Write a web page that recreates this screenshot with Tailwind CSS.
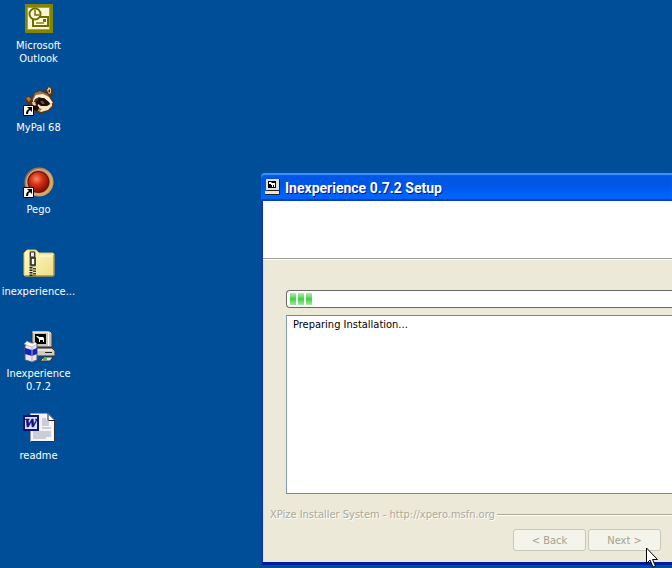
<!DOCTYPE html>
<html lang="en">
<head>
<meta charset="UTF-8">
<meta name="viewport" content="width=device-width, initial-scale=1.0">
<title>Inexperience 0.7.2 Setup</title>
<script src="https://cdn.jsdelivr.net/npm/@tailwindcss/browser@4"></script>
</head>
<body class="relative h-screen overflow-hidden bg-[#004e98] font-['DejaVu_Sans_Condensed','DejaVu_Sans',sans-serif] text-[11px] leading-[13px]">

<!-- Desktop icons -->
<ul class="w-[77px] pt-[3px] text-center text-white">
  <li class="h-[82px]">
    <a href="#" class="flex flex-col items-center gap-1">
      <svg class="size-8" viewBox="0 0 32 32">
        <rect x="2" y="1" width="28" height="29" fill="#848400"/>
        <rect x="4.500" y="4.500" width="22" height="22" fill="#f7f5d4" stroke="#a5a532"/>
        <path d="M10 14h15v9H10z" fill="#fffbe0" stroke="#6f6f00" stroke-width="2"/>
        <path d="M13 20h8" stroke="#848400" stroke-width="1.500"/>
        <rect x="20" y="16" width="3" height="3" fill="#6f6f00"/>
        <circle cx="12" cy="11" r="5.500" fill="#fffbe0" stroke="#6f6f00" stroke-width="2"/>
        <path d="M12 7v5h4" fill="none" stroke="#6f6f00" stroke-width="1.500"/>
      </svg>
      <span>Microsoft Outlook</span>
    </a>
  </li>
  <li class="h-[82px]">
    <a href="#" class="flex flex-col items-center gap-1">
      <svg class="size-8" viewBox="0 0 32 32">
        <!-- head and ears -->
        <path d="M2 13l3-2 4 1 2-4 5-3 7 1 1-4 3-1 3 3 0 6-2 2 3 4-1 6-4 4-6 2-6 0-6-3-4-6z" fill="#54341d"/>
        <path d="M24 5l2-3 2 2 0 4-2 1z" fill="#e9cda4"/>
        <path d="M25 6l2-2 0 4z" fill="#3a2012"/>
        <path d="M3 13l3-1 2 2-2 3z" fill="#a6774a"/>
        <!-- fur -->
        <path d="M9 15l3-7 5-2 7 3 3 4-8-3-6 2z" fill="#9c7248"/>
        <!-- brow, mask and muzzle -->
        <path d="M10 15l3-5 7-1 6 3 4 6-3 1-5-5-6-2-4 2-2 4z" fill="#fff1d6"/>
        <path d="M13 17l3-4 5 0 5 4 2 4-4 1-6-1-4 1z" fill="#1d0e09"/>
        <path d="M17 16l3 0 2 3-3 0z" fill="#6b4830"/>
        <path d="M15 19l3 2 6 0 5-3 0 3-4 4-7 2-4-2z" fill="#f8e5bf"/>
        <path d="M9 17l3 0 1 3-3 1z" fill="#e6c99c"/>
        <path d="M11 21l4 0 2 3-3 2-3-1z" fill="#160b08"/>
        <path d="M16 23l3 1-2 2-2-1z" fill="#a6774a"/>
        <path d="M0.500 20.500h10v10h-10z" fill="#fff" stroke="#000"/>
        <path d="M4 22h5v5l-2-2q-2 1-2 4H3q0-4 3-5z" fill="#000"/>
      </svg>
      <span>MyPal 68</span>
    </a>
  </li>
  <li class="h-[82px]">
    <a href="#" class="flex flex-col items-center gap-1">
      <svg class="size-8" viewBox="0 0 32 32">
        <defs>
          <radialGradient id="ball" cx=".4" cy=".35" r=".65">
            <stop offset="0" stop-color="#f58a66"/>
            <stop offset=".45" stop-color="#d83217"/>
            <stop offset="1" stop-color="#851000"/>
          </radialGradient>
          <linearGradient id="ring" x1="0" y1="0" x2="1" y2="1">
            <stop offset="0" stop-color="#8b5a3c"/>
            <stop offset=".5" stop-color="#c99a68"/>
            <stop offset="1" stop-color="#e0a13e"/>
          </linearGradient>
        </defs>
        <circle cx="16" cy="15" r="14.500" fill="url(#ring)"/>
        <circle cx="16" cy="15" r="12.500" fill="none" stroke="#d9b48a"/>
        <circle cx="15.500" cy="15" r="11" fill="#6c1503"/>
        <circle cx="15.500" cy="15" r="10" fill="url(#ball)"/>
        <path d="M0.500 20.500h10v10h-10z" fill="#fff" stroke="#000"/>
        <path d="M4 22h5v5l-2-2q-2 1-2 4H3q0-4 3-5z" fill="#000"/>
      </svg>
      <span>Pego</span>
    </a>
  </li>
  <li class="h-[82px]">
    <a href="#" class="flex flex-col items-center gap-1">
      <svg class="size-8" viewBox="0 0 32 32">
        <defs>
          <linearGradient id="folder" x1="0" y1="0" x2="1" y2="1">
            <stop offset="0" stop-color="#fffbc8"/>
            <stop offset="1" stop-color="#efdc85"/>
          </linearGradient>
        </defs>
        <path d="M1 26V4l3-3h9l3 3h14l1 1v21l-1 1H2z" fill="url(#folder)" stroke="#d3c06a"/>
        <path d="M2 27h29V6" fill="none" stroke="#8f7c32"/>
        <path d="M16 7h13" stroke="#fffde0"/>
        <rect x="6" y="2" width="7" height="16" rx="2" fill="#aaa98f"/>
        <path d="M7.500 3h4v5h-4z" fill="#f0f0e4" stroke="#33332a"/>
        <path d="M8 9h4v7H8z" fill="#fff" stroke="#26261e" stroke-width="1.500"/>
        <path d="M8 18v9" stroke="#222" stroke-width="3" stroke-dasharray="1.500 1"/>
        <path d="M11.500 19v8" stroke="#444" stroke-width="3" stroke-dasharray="1.500 1"/>
      </svg>
      <span>inexperience...</span>
    </a>
  </li>
  <li class="h-[82px]">
    <a href="#" class="flex flex-col items-center gap-1">
      <svg class="size-8" viewBox="0 0 32 32">
        <path d="M12 17h17l3 3v5H12z" fill="#cfccc2" stroke="#333"/>
        <path d="M22 21.500h7" stroke="#222"/>
        <path d="M13 19h16" stroke="#fff"/>
        <path d="M9 0h18l2 2v14H11l-2-1z" fill="#c9c6bb" stroke="#33332d"/>
        <path d="M9.500 1h16v14" fill="none" stroke="#fff"/>
        <rect x="12" y="3" width="11" height="10" fill="#000"/>
        <path d="M13 5l2 0 1 1h4l1 1v4h-1V9h-3v2h-1V8z" fill="#fff"/>
        <path d="M3 14l4-3 7 2v16l-5 2-7-2V14z" fill="#e8e6f2" stroke="#55556a"/>
        <path d="M2 17l7 2 5-2v6l-5 2-7-2z" fill="#1824b8"/>
        <path d="M9 16v15" stroke="#aaaabc"/>
        <path d="M1 13l3-3 5 3 3-2 2 2-5 3z" fill="#fff" stroke="#888" stroke-width=".5"/>
        <path d="M21 26h9l-3 4H17z" fill="#e9e7de" stroke="#333"/>
        <path d="M20 28h4" stroke="#24a046" stroke-width="1.500"/>
      </svg>
      <span>Inexperience 0.7.2</span>
    </a>
  </li>
  <li class="h-[82px]">
    <a href="#" class="flex flex-col items-center gap-1">
      <svg class="size-8" viewBox="0 0 32 32">
        <path d="M7.500 0.500h18l6 6v22h-24z" fill="#f4f5fb" stroke="#99a"/>
        <path d="M31.500 7v21.500H8" fill="none" stroke="#333"/>
        <path d="M25 0.500v7h7z" fill="#fff" stroke="#222"/>
        <path d="M19 6h4M19 8h7M19 10h7M19 12h7M19 15h9M10 19h18M10 21h18M10 23h18M10 25h13" stroke="#a3a6b8"/>
        <rect x="1" y="3" width="14" height="14" fill="#dfe2ff" stroke="#10107c" stroke-width="2"/>
        <text x="8" y="14" text-anchor="middle" font-family="DejaVu Serif" font-size="11" font-weight="bold" font-style="italic" fill="#10107c" stroke="#10107c" stroke-width=".5">W</text>
      </svg>
      <span>readme</span>
    </a>
  </li>
</ul>

<!-- Setup window, flush with the right side of the desktop -->
<main class="absolute top-[173px] right-0 left-[261px] flex h-[392px] flex-col rounded-tl border-b-3 border-l-2 border-b-[#001ea0] border-l-[#0831d9] bg-[#ece9d8]">
  <header class="-ml-0.5 flex h-7 shrink-0 items-center gap-1 rounded-tl bg-linear-to-b from-[#0058e6] from-0% via-[#0055e5] via-40% to-[#0066ff] to-90% pl-1 shadow-[inset_0_2px_1px_#3a93ff,inset_0_-2px_1px_#0040c0]">
    <svg class="size-4" viewBox="0 0 16 16">
      <path d="M1 0h13v11H1z" fill="#e2dfd6"/>
      <path d="M14.500 0v11.500H2" fill="none" stroke="#222"/>
      <rect x="3" y="2" width="8" height="7" fill="#000"/>
      <path d="M4 3h2l1 1h3v4H9V6H8v2H7V6H6V5H4z" fill="#fff"/>
      <path d="M0 12h14v3H0z" fill="#e7e4da"/>
      <path d="M0 15.500h14.500V12" fill="none" stroke="#222"/>
    </svg>
    <h1 class="pt-0.5 font-[Roboto,sans-serif] text-sm font-bold text-white [text-shadow:1px_1px_#0f1089]">Inexperience 0.7.2 Setup</h1>
  </header>
  <div class="h-[58px] shrink-0 border-b border-[#9d9d93] bg-white"></div>
  <div class="flex flex-1 flex-col border-t border-white">
    <div class="flex flex-1 flex-col gap-[7px] pt-[30px] pl-[23px]">
      <div role="progressbar" aria-label="Installation progress" class="flex h-[18px] gap-0.5 rounded-l border border-r-0 border-[#686868] bg-white px-[3px] py-0.5">
        <span class="w-1.5 bg-linear-to-b from-[#b3ecb3] via-[#2ed333] to-[#a0e8a0]"></span>
        <span class="w-1.5 bg-linear-to-b from-[#b3ecb3] via-[#2ed333] to-[#a0e8a0]"></span>
        <span class="w-1.5 bg-linear-to-b from-[#b3ecb3] via-[#2ed333] to-[#a0e8a0]"></span>
      </div>
      <ul class="flex-1 border border-r-0 border-[#7f9db9] border-t-[#85857d] border-b-[#85857d] bg-white px-1.5 py-0.5 text-black">
        <li>Preparing Installation...</li>
      </ul>
    </div>
    <footer class="pt-3.5 pb-[11px] pl-[7px]">
      <div class="flex items-center gap-0.5 text-[#aca899] [text-shadow:1px_1px_#fff]">
        <span>XPize Installer System - http://xpero.msfn.org</span>
        <span class="h-0.5 flex-1 border-t border-b border-t-[#aca899] border-b-white"></span>
      </div>
      <div class="flex justify-end gap-0.5 pt-2 pr-[11px] text-[#a1a192]">
        <button disabled class="h-[22px] w-[73px] rounded-[3px] border border-[#c9c7ba] bg-[#f5f4ea]">&lt; Back</button>
        <button disabled class="h-[22px] w-[73px] rounded-[3px] border border-[#c9c7ba] bg-[#f5f4ea]">Next &gt;</button>
      </div>
    </footer>
  </div>
</main>

<!-- Mouse pointer -->
<svg class="absolute top-[547px] left-[646px] h-[21px] w-3" viewBox="0 0 12 21">
  <path d="M0.500 1v15.500l3.500-3.500 3 7 2.500-1-3-6.500h5z" fill="#fff" stroke="#000"/>
</svg>
</body>
</html>
